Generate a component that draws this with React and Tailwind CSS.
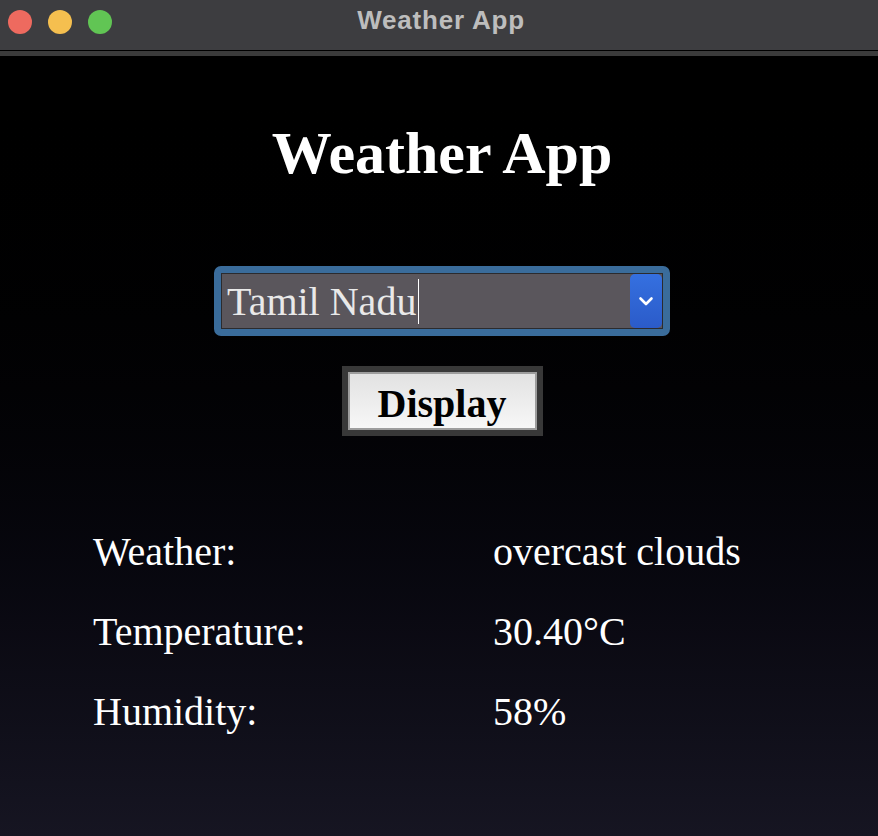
import { useState } from 'react';

const serif = "font-['Liberation_Serif','Times_New_Roman',serif]";

const rows = [
  { label: 'Weather:', value: 'overcast clouds' },
  { label: 'Temperature:', value: '30.40°C' },
  { label: 'Humidity:', value: '58%' },
];

const TitleBar = () => (
  <div className="grid h-[50px] grid-cols-[1fr_auto_1fr] items-start bg-[#3d3d40]">
    <div className="flex gap-[16px] pl-[8px] pt-[10px]">
      <span className="h-[24px] w-[24px] rounded-full bg-[#ee6a5f]" />
      <span className="h-[24px] w-[24px] rounded-full bg-[#f5bf4f]" />
      <span className="h-[24px] w-[24px] rounded-full bg-[#61c554]" />
    </div>
    <div className="pl-[4px] pt-[7px] font-['Liberation_Sans',Arial,sans-serif] text-[26px] font-bold leading-none tracking-[0.8px] text-[#bdbdbd]">
      Weather App
    </div>
    <div />
  </div>
);

const CitySelect = ({ value }) => (
  <div className="mt-[83px] h-[70px] w-[456px] rounded-[7px] border-[7px] border-[#3a6c9b]">
    <div className="flex h-full items-stretch border border-[#2b2b2e] bg-[#5a565c]">
      <div className="flex flex-1 items-start pl-[5px] pt-[8px]">
        <span className={`${serif} text-[40px] leading-none text-[#e9e9e9]`}>{value}</span>
        <span className="ml-[2px] mt-[-3px] h-[45px] w-px bg-white" />
      </div>
      <div className="flex w-[32px] items-center justify-center rounded-[5px] bg-linear-to-b from-[#3570e0] to-[#2b5bc9]">
        <svg width="16" height="11" viewBox="0 0 16 11" fill="none">
          <path d="M2.5 2.5 8 8 13.5 2.5" stroke="white" strokeWidth="2.6" strokeLinecap="round" strokeLinejoin="round" />
        </svg>
      </div>
    </div>
  </div>
);

export default function App() {
  const [city] = useState('Tamil Nadu');

  return (
    <div className="flex h-[836px] flex-col bg-black">
      <TitleBar />
      <div className="h-px bg-black" />
      <div className="h-[5px] bg-[#3b3b3b]" />
      <main className="flex flex-1 flex-col items-center bg-linear-to-b from-black to-[#161522] pl-[6px] pt-[67px]">
        <h1 className={`${serif} text-[60px] font-bold leading-none text-white`}>Weather App</h1>

        <CitySelect value={city} />

        <button className="mt-[30px] h-[70px] w-[201px] border-[6px] border-[#383838]">
          <div className="flex h-full justify-center border-2 border-[#9d9d9d] bg-linear-to-b from-[#e2e2e2] to-[#f7f7f7] pt-[10px]">
            <span className={`${serif} text-[40px] font-bold leading-none text-black`}>Display</span>
          </div>
        </button>

        <div className={`${serif} mt-[76px] grid grid-cols-[400px_1fr] self-stretch pl-[87px] text-[40px] leading-[80px] text-white`}>
          {rows.map(row => (
            <div key={row.label} className="contents">
              <span>{row.label}</span>
              <span>{row.value}</span>
            </div>
          ))}
        </div>
      </main>
    </div>
  );
}
